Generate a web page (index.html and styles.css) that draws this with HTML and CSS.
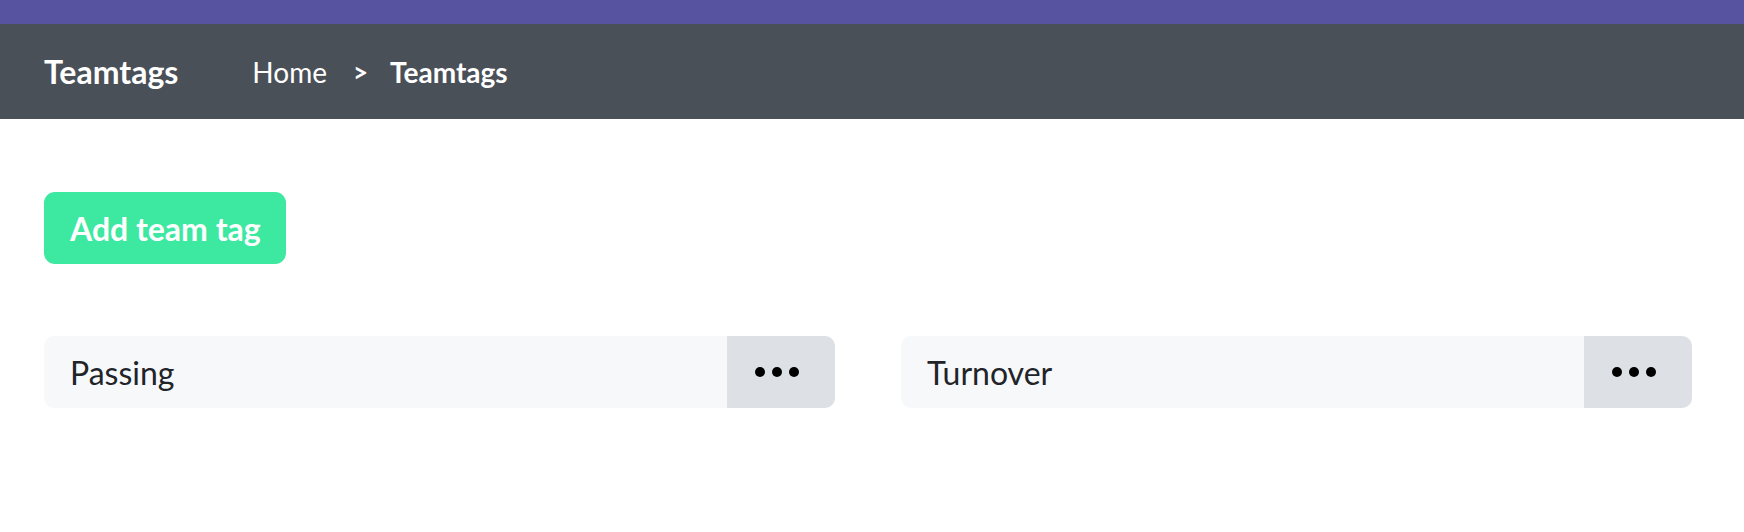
FILE: index.html
```html
<!DOCTYPE html>
<html lang="en">
<head>
<meta charset="utf-8">
<title>Teamtags</title>
<link rel="stylesheet" href="styles.css">
</head>
<body>
<div class="topbar"></div>
<header class="header">
  <div class="logo">Teamtags</div>
  <nav class="crumbs">
    <span class="crumb">Home</span>
    <span class="sep">&gt;</span>
    <span class="crumb current">Teamtags</span>
  </nav>
</header>
<main class="main">
  <button class="add-btn">Add team tag</button>
  <div class="tags">
    <div class="tag">
      <div class="tag-name">Passing</div>
      <div class="tag-menu"><span class="dot"></span><span class="dot"></span><span class="dot"></span></div>
    </div>
    <div class="tag">
      <div class="tag-name">Turnover</div>
      <div class="tag-menu"><span class="dot"></span><span class="dot"></span><span class="dot"></span></div>
    </div>
  </div>
</main>
</body>
</html>
```
FILE: styles.css
```css
* { box-sizing: border-box; }
body {
  margin: 0;
  font-family: Lato, "Open Sans", sans-serif;
  background: #ffffff;
  color: #212429;
}
.topbar {
  height: 24px;
  background: #5753a1;
}
.header {
  height: 95px;
  background: #4a5058;
  display: flex;
  align-items: center;
  padding-left: 44px;
  color: #ffffff;
}
.logo {
  font-weight: 700;
  font-size: 32px;
  margin-right: 74px;
}
.crumbs {
  display: flex;
  align-items: center;
  font-size: 28px;
}
.crumb.current { font-weight: 700; }
.sep {
  font-size: 26px;
  font-weight: 700;
  margin: 0 22px 0 26px;
}
.main {
  padding: 73px 52px 0 44px;
}
.add-btn {
  height: 72px;
  padding: 0 25px 0 26px;
  border: none;
  border-radius: 11px;
  background: #3de8a1;
  color: #ffffff;
  font-family: inherit;
  font-weight: 700;
  font-size: 32px;
  cursor: pointer;
}
.tags {
  margin-top: 72px;
  display: grid;
  grid-template-columns: 1fr 1fr;
  column-gap: 66px;
}
.tag {
  height: 72px;
  display: flex;
  background: #f7f8fa;
  border-radius: 10px;
  overflow: hidden;
}
.tag-name {
  flex: 1;
  display: flex;
  align-items: center;
  padding-left: 26px;
  font-size: 32px;
}
.tag-menu {
  width: 108px;
  background: #dde0e4;
  display: flex;
  align-items: center;
  justify-content: center;
  gap: 7px;
  padding-left: 2px;
  padding-right: 10px;
}
.dot {
  width: 10px;
  height: 10px;
  border-radius: 50%;
  background: #000000;
}
```
